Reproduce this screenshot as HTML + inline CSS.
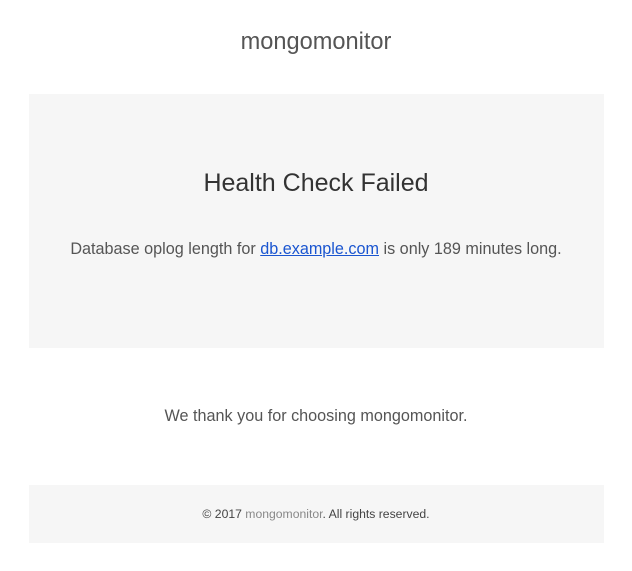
<!DOCTYPE html>
<html><head><meta charset="utf-8"><style>
body{margin:0;width:632px;height:571px;background:#fff;font-family:"Liberation Sans",Arial,sans-serif;position:relative;overflow:hidden}
.abs{position:absolute;left:0;width:632px;text-align:center;white-space:nowrap}
.box{position:absolute;left:29px;width:575px;background:#f6f6f6}
</style></head><body>
<div class="abs" style="top:29px;font-size:23.6px;color:#555;">mongomonitor</div>
<div class="box" style="top:94px;height:254px"></div>
<div class="abs" style="top:169px;font-size:25px;color:#333;">Health Check Failed</div>
<div class="abs" style="top:240px;font-size:16.2px;color:#555;">Database oplog length for <a style="color:#1a55d0;text-decoration:underline">db.example.com</a> is only 189 minutes long.</div>
<div class="abs" style="top:407px;font-size:16.2px;color:#555;">We thank you for choosing mongomonitor.</div>
<div class="box" style="top:485px;height:58px"></div>
<div class="abs" style="top:507px;font-size:12.2px;color:#444;">© 2017 <span style="color:#888">mongomonitor</span>. All rights reserved.</div>
</body></html>
